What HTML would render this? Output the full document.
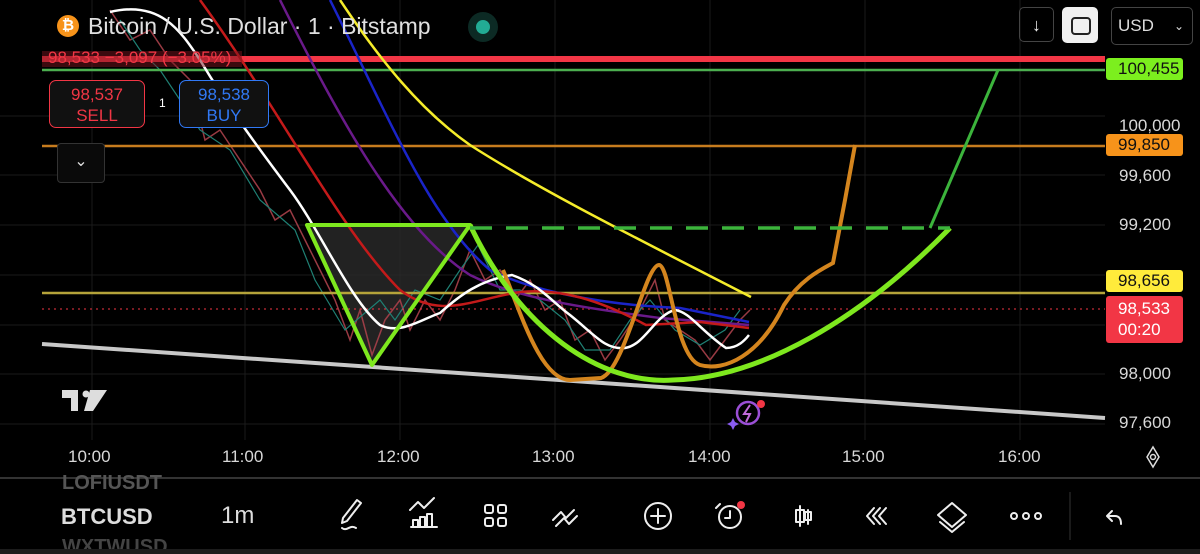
<!DOCTYPE html>
<html><head><meta charset="utf-8">
<style>
html,body{margin:0;padding:0;background:#000;width:1200px;height:554px;overflow:hidden;font-family:"Liberation Sans",sans-serif;}
#w{position:relative;width:1200px;height:554px;overflow:hidden;}
.a{position:absolute;}
.pl{position:absolute;width:80px;color:#d8d8d8;font-size:17px;}
.tg{position:absolute;left:1106px;width:77px;height:22px;border-radius:3px;font-size:17px;line-height:22px;padding-left:12px;box-sizing:border-box;}
.tm{position:absolute;top:447px;color:#d8d8d8;font-size:17px;}
</style></head><body><div id="w">
<svg class="a" style="left:0;top:0" width="1200" height="554" viewBox="0 0 1200 554">
<g stroke="#1a1a1a" stroke-width="1">
<line x1="0" y1="116" x2="1105" y2="116"/><line x1="0" y1="175" x2="1105" y2="175"/><line x1="0" y1="225" x2="1105" y2="225"/><line x1="0" y1="275" x2="1105" y2="275"/><line x1="0" y1="325" x2="1105" y2="325"/><line x1="0" y1="374" x2="1105" y2="374"/><line x1="0" y1="424" x2="1105" y2="424"/>
<line x1="92" y1="0" x2="92" y2="440"/><line x1="245" y1="0" x2="245" y2="440"/><line x1="400" y1="0" x2="400" y2="440"/><line x1="555" y1="0" x2="555" y2="440"/><line x1="710" y1="0" x2="710" y2="440"/><line x1="865" y1="0" x2="865" y2="440"/><line x1="1020" y1="0" x2="1020" y2="440"/>
</g>
<polygon points="307,225 470,225 372,365" fill="#2a2a2a" opacity="0.8"/>
<polyline fill="none" stroke="#a8404a" stroke-width="1.5" opacity="0.9" points="110,10 130,40 150,30 170,60 190,80 205,140 220,130 240,160 260,190 275,220 290,210 305,240 320,270 335,300 350,340 360,310 372,355 385,320 400,300 410,330 425,300 440,320 455,290 470,250 485,280 500,270 515,300 530,280 545,310 560,300 575,340 590,330 605,360 620,340 640,310 655,280 665,320 680,330 695,340 710,360 725,340 740,320 750,310"/>
<polyline fill="none" stroke="#1f8074" stroke-width="1.2" points="120,20 140,50 160,70 200,130 230,150 260,200 295,230 315,280 345,330 380,300 395,320 415,290 440,300 460,270 478,245 500,290 520,290 540,300 565,320 585,350 610,350 630,320 650,300 675,330 700,345 725,330 740,310"/>
<line x1="42" y1="59" x2="1105" y2="59" stroke="#f23645" stroke-width="6"/>
<line x1="42" y1="70" x2="1105" y2="70" stroke="#4caf50" stroke-width="2.5"/>
<line x1="42" y1="146" x2="1105" y2="146" stroke="#c77c1e" stroke-width="2.5"/>
<line x1="42" y1="293" x2="1105" y2="293" stroke="#b5a33a" stroke-width="2.5"/>
<line x1="42" y1="309" x2="1105" y2="309" stroke="#f23645" stroke-width="1" stroke-dasharray="2,4"/>
<line x1="42" y1="344" x2="1105" y2="418" stroke="#c8c8c8" stroke-width="4"/>
<path d="M340,0 C380,60 420,110 470,145 C540,190 640,240 751,297" fill="none" stroke="#f5ec2a" stroke-width="2.5"/>
<path d="M330,0 C390,120 430,220 490,270 C530,290 600,305 680,308 L749,322" fill="none" stroke="#1a24c8" stroke-width="2.5"/>
<path d="M280,0 C340,120 400,230 470,275 C520,300 600,310 660,318 L749,325" fill="none" stroke="#6a1a8a" stroke-width="2.5"/>
<path d="M200,0 C280,110 340,230 400,290 C440,320 470,300 520,292 C560,288 600,300 646,325 L700,322 L749,328" fill="none" stroke="#c41a1a" stroke-width="2.5"/>
<path d="M110,12 C160,0 180,30 200,60 C230,110 260,150 290,190 C320,230 350,300 380,325 C400,335 420,320 440,313 C460,295 480,280 512,275 C540,285 550,300 570,315 C595,335 605,350 625,348 C645,345 655,315 675,310 C690,312 700,330 726,348 C738,348 745,340 749,335" fill="none" stroke="#fff" stroke-width="2.5"/>
<path d="M503,270 C520,310 540,380 570,380 L601,378 C625,370 645,265 659,265 C670,265 675,357 700,365 C725,372 760,355 784,305 C800,280 820,270 833,263 L845,200 L855,145" fill="none" stroke="#d4851e" stroke-width="4"/>
<polygon points="307,225 470,225 372,365" fill="none" stroke="#7ee81e" stroke-width="4" stroke-linejoin="round"/>
<path d="M470,225 C520,330 600,385 673,380 C760,378 860,320 950,228" fill="none" stroke="#7ee81e" stroke-width="5"/>
<line x1="470" y1="228" x2="950" y2="228" stroke="#3cb43c" stroke-width="3.5" stroke-dasharray="22,14"/>
<polyline points="930,228 998,70" fill="none" stroke="#3cb43c" stroke-width="3"/>
<path d="M62,390 h16 v21 h-7 v-13 h-9z M90,390 h17 l-14,21 h-9z" fill="#ddd"/><circle cx="86" cy="394" r="3.5" fill="#ddd"/>
<circle cx="748" cy="413" r="11" fill="none" stroke="#9b4fd6" stroke-width="2.5"/><path d="M750,405 l-6,9 h6 l-4,8" fill="none" stroke="#c06ad8" stroke-width="2"/><circle cx="761" cy="404" r="4" fill="#f23645"/><path d="M733,418 l2,4 4,2 -4,2 -2,4 -2,-4 -4,-2 4,-2z" fill="#8a5cf0"/>
<line x1="0" y1="478" x2="1200" y2="478" stroke="#333" stroke-width="2"/>
<line x1="1070" y1="492" x2="1070" y2="540" stroke="#333" stroke-width="1"/>
<path d="M1147,457 l6,-10 l6,10 -6,10z" fill="none" stroke="#ddd" stroke-width="1.5"/><circle cx="1153" cy="457" r="2.5" fill="none" stroke="#ddd" stroke-width="1.5"/>
<g fill="none" stroke="#eee" stroke-width="2" stroke-linecap="round" stroke-linejoin="round">
<path d="M357,500 l-14,18 l-1,5 l5,-2 l14,-18z M342,528 c5,4 8,-4 14,0"/>
<path d="M411,527 h26 M413,526 v-6 h5 v6 M420,526 v-9 h5 v9 M427,526 v-12 h5 v12 M410,510 l8,-8 6,6 10,-10"/>
<rect x="485" y="505" width="8" height="8" rx="2"/><rect x="498" y="505" width="8" height="8" rx="2"/><rect x="485" y="518" width="8" height="8" rx="2"/><rect x="498" y="518" width="8" height="8" rx="2"/>
<path d="M553,520 l8,-8 5,6 l8,-8 M556,526 l8,-8 5,6 l8,-8"/>
<circle cx="658" cy="516" r="13"/><path d="M658,509 v14 M651,516 h14"/>
<circle cx="730" cy="517" r="11"/><path d="M730,511 v7 h-5 M720,504 l-4,4"/>
<path d="M800,506 v20 M796,510 h8 v12 h-8z M808,510 v14 M805,512 h6 v8 h-6z"/>
<path d="M874,508 l-7,8 7,8 M880,508 l-7,8 7,8 M886,508 l-7,8 7,8"/>
<path d="M952,503 l14,12 -14,12 -14,-12z M940,522 l12,10 12,-10"/>
<circle cx="1014" cy="516" r="3"/><circle cx="1026" cy="516" r="3"/><circle cx="1038" cy="516" r="3"/>
<path d="M1112,511 l-5,5 5,5 M1107,516 h8 c4,0 6,3 6,8"/>
</g>
<circle cx="741" cy="505" r="4" fill="#f23645"/>
</svg>
<div class="a" style="left:57px;top:15px;width:22px;height:22px;border-radius:50%;background:#f7931a;color:#fff;font-size:15px;font-weight:bold;text-align:center;line-height:22px;">₿</div>
<div class="a" style="left:88px;top:13px;color:#e0e0e0;font-size:23px;">Bitcoin / U.S. Dollar · 1 · Bitstamp</div>
<div class="a" style="left:468px;top:12px;width:30px;height:30px;border-radius:50%;background:#0c2a24;"></div>
<div class="a" style="left:476px;top:20px;width:14px;height:14px;border-radius:50%;background:#22ab94;"></div>
<div class="a" style="left:42px;top:51px;width:200px;height:16px;background:rgba(120,20,30,0.5)"></div>
<div class="a" style="left:48px;top:48px;color:#f23645;font-size:17px;">98,533 −3,097 (−3.05%)</div>
<div class="a" style="left:49px;top:80px;width:96px;height:48px;border:1.5px solid #f23645;border-radius:7px;background:#111;color:#f23645;text-align:center;font-size:17px;line-height:21px;padding-top:3px;box-sizing:border-box;">98,537<br>SELL</div>
<div class="a" style="left:159px;top:96px;color:#fff;font-size:12px;">1</div>
<div class="a" style="left:179px;top:80px;width:90px;height:48px;border:1.5px solid #3179f5;border-radius:7px;background:#111;color:#3179f5;text-align:center;font-size:17px;line-height:21px;padding-top:3px;box-sizing:border-box;">98,538<br>BUY</div>
<div class="a" style="left:57px;top:143px;width:46px;height:38px;border:1.5px solid #333;border-radius:4px;background:#0a0a0a;color:#ddd;text-align:center;line-height:36px;font-size:16px;">⌄</div>
<div class="a" style="left:1019px;top:7px;width:35px;height:35px;border:1.5px solid #444;border-radius:5px;color:#eee;text-align:center;line-height:35px;font-size:18px;box-sizing:border-box;">↓</div>
<div class="a" style="left:1062px;top:7px;width:36px;height:36px;border-radius:5px;background:#f0f0f0;"><div class="a" style="left:9px;top:10px;width:16px;height:14px;border:2px solid #222;border-radius:4px;"></div></div>
<div class="a" style="left:1111px;top:7px;width:82px;height:38px;border:1.5px solid #444;border-radius:5px;color:#ddd;font-size:17px;line-height:36px;padding-left:6px;box-sizing:border-box;">USD <span style="position:absolute;right:8px;font-size:12px;">⌄</span></div>
<div class="tg" style="top:58px;background:#7cef1e;color:#111;">100,455</div>
<div class="pl" style="top:116px;left:1119px;">100,000</div>
<div class="tg" style="top:134px;background:#f7931a;color:#111;">99,850</div>
<div class="pl" style="top:166px;left:1119px;">99,600</div>
<div class="pl" style="top:215px;left:1119px;">99,200</div>
<div class="tg" style="top:270px;background:#ffeb3b;color:#111;">98,656</div>
<div class="tg" style="top:296px;height:47px;background:#f23645;color:#fff;line-height:21px;padding-top:2px;">98,533<br>00:20</div>
<div class="pl" style="top:364px;left:1119px;">98,000</div>
<div class="pl" style="top:413px;left:1119px;">97,600</div>
<div class="tm" style="left:68px;">10:00</div><div class="tm" style="left:222px;">11:00</div><div class="tm" style="left:377px;">12:00</div><div class="tm" style="left:532px;">13:00</div><div class="tm" style="left:688px;">14:00</div><div class="tm" style="left:842px;">15:00</div><div class="tm" style="left:998px;">16:00</div>
<div class="a" style="left:62px;top:472px;color:#555;font-size:20px;font-weight:bold;">LOFIUSDT</div>
<div class="a" style="left:61px;top:504px;color:#ddd;font-size:22px;font-weight:bold;">BTCUSD</div>
<div class="a" style="left:221px;top:502px;color:#ddd;font-size:24px;">1m</div>
<div class="a" style="left:62px;top:537px;color:#444;font-size:20px;font-weight:bold;line-height:20px;">WXTWUSD</div>
<div class="a" style="left:0;top:549px;width:1200px;height:5px;background:#1c1c1c;"></div>
</div></body></html>
